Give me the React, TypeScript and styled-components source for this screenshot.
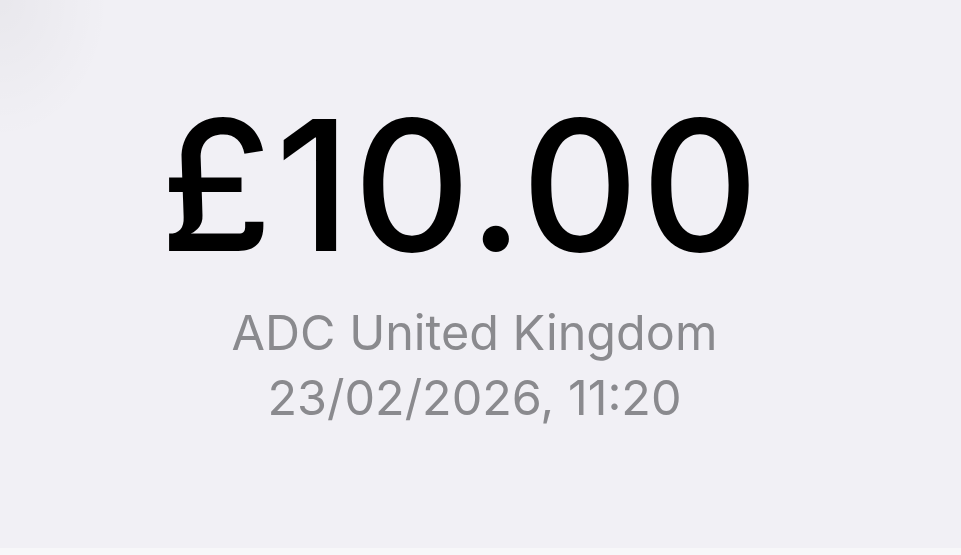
import styled, { createGlobalStyle } from "styled-components";

const GlobalStyle = createGlobalStyle`
	html, body {
		margin: 0;
		padding: 0;
		background: #f1f0f5;
	}
	#root {
		height: 100vh;
	}
`;

const Screen = styled.div`
	height: 100%;
	display: flex;
	flex-direction: column;
	background-color: #f1f0f5;
	background-image: radial-gradient(ellipse 110px 140px at 0 0, rgba(0, 0, 0, 0.035), rgba(0, 0, 0, 0));
	font-family: Inter, "Liberation Sans", sans-serif;
`;

const Summary = styled.div`
	flex: 1;
	display: flex;
	flex-direction: column;
	align-items: center;
	padding-top: 94px;
	padding-right: 12px;
`;

// amount sits a little left of the detail lines
const Amount = styled.h1`
	margin: 0 28px 0 0;
	font-size: 182px;
	font-weight: 500;
	line-height: 1;
	letter-spacing: 2.5px;
	color: #000;
`;

const Details = styled.div`
	display: flex;
	flex-direction: column;
	align-items: center;
	margin-top: 24px;
`;

const Detail = styled.p`
	margin: 0;
	font-size: 48.5px;
	font-weight: 400;
	line-height: 65px;
	color: #8a8a8e;
`;

const BottomEdge = styled.div`
	height: 7px;
	background: #f7f7f9;
`;

export default function App() {
	return (
		<>
			<GlobalStyle />
			<Screen>
				<Summary>
					<Amount>£10.00</Amount>
					<Details>
						<Detail>ADC United Kingdom</Detail>
						<Detail>23/02/2026, 11:20</Detail>
					</Details>
				</Summary>
				<BottomEdge />
			</Screen>
		</>
	);
}
